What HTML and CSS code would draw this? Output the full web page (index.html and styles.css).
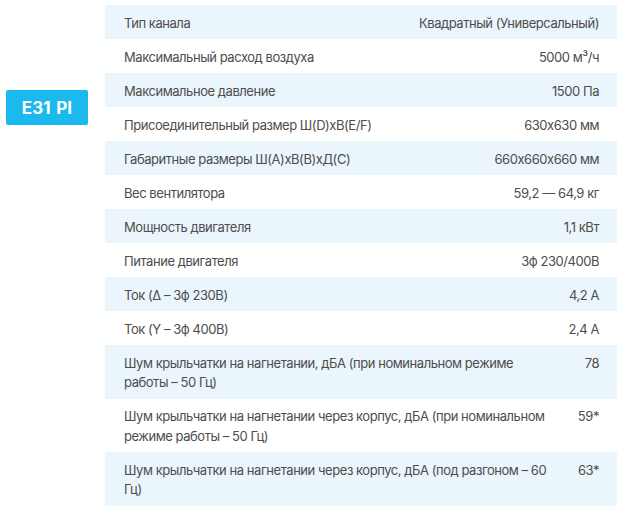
FILE: index.html
```html
<!DOCTYPE html>
<html lang="ru">
<head>
<meta charset="utf-8">
<link rel="stylesheet" href="styles.css">
</head>
<body>
<div class="page">
  <div class="side">
    <div class="badge">E31 PI</div>
  </div>
  <div class="specs">
    <div class="row"><div class="label">Тип канала</div><div class="value">Квадратный (Универсальный)</div></div>
    <div class="row"><div class="label">Максимальный расход воздуха</div><div class="value">5000 м³/ч</div></div>
    <div class="row"><div class="label">Максимальное давление</div><div class="value">1500 Па</div></div>
    <div class="row"><div class="label">Присоединительный размер Ш(D)xB(E/F)</div><div class="value">630x630 мм</div></div>
    <div class="row"><div class="label">Габаритные размеры Ш(A)xB(B)xД(C)</div><div class="value">660x660x660 мм</div></div>
    <div class="row"><div class="label">Вес вентилятора</div><div class="value">59,2 — 64,9 кг</div></div>
    <div class="row"><div class="label">Мощность двигателя</div><div class="value">1,1 кВт</div></div>
    <div class="row"><div class="label">Питание двигателя</div><div class="value">3ф 230/400В</div></div>
    <div class="row"><div class="label">Ток (Δ – 3ф 230В)</div><div class="value">4,2 А</div></div>
    <div class="row"><div class="label">Ток (Y – 3ф 400В)</div><div class="value">2,4 А</div></div>
    <div class="row"><div class="label">Шум крыльчатки на нагнетании, дБА (при номинальном режиме работы – 50 Гц)</div><div class="value">78</div></div>
    <div class="row"><div class="label">Шум крыльчатки на нагнетании через корпус, дБА (при номинальном режиме работы – 50 Гц)</div><div class="value">59*</div></div>
    <div class="row"><div class="label">Шум крыльчатки на нагнетании через корпус, дБА (под разгоном – 60 Гц)</div><div class="value">63*</div></div>
  </div>
</div>
</body>
</html>
```
FILE: styles.css
```css
html, body {
  margin: 0;
  padding: 0;
  background: #ffffff;
}
body {
  font-family: Inter, "Noto Sans", sans-serif;
  font-feature-settings: "calt" 0;
  color: #4d4d4d;
}
.page {
  display: flex;
  align-items: flex-start;
  padding: 5px 7px 0 6px;
  gap: 17px;
}
.side {
  width: 82px;
  flex-shrink: 0;
  padding-top: 85px;
}
.badge {
  background: #1cb9ee;
  color: #ffffff;
  font-weight: 700;
  font-size: 17px;
  height: 35px;
  line-height: 36px;
  text-align: center;
  border-radius: 2px;
  letter-spacing: 0.2px;
  word-spacing: 1px;
}
.specs {
  flex: 1;
  display: flex;
  flex-direction: column;
}
.row {
  display: flex;
  justify-content: space-between;
  gap: 20px;
  padding: 8.5px 18px 6px 19px;
  font-size: 13px;
  line-height: 19.5px;
  letter-spacing: -0.45px;
}
.row:nth-child(odd) {
  background: #eaf6fb;
}
.label {
  flex: 1 1 auto;
}
.value {
  flex: 0 0 auto;
  min-width: 24px;
  text-align: right;
}
```
